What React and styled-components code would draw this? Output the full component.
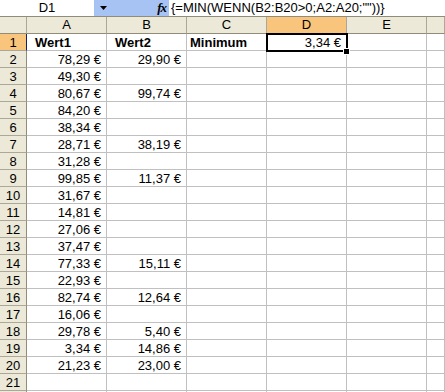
import React from 'react';
import styled, { createGlobalStyle, css } from 'styled-components';

const GlobalStyle = createGlobalStyle`
  html, body {
    margin: 0;
    padding: 0;
    background: #ffffff;
    overflow: hidden;
  }
  body {
    font-family: "Liberation Sans", Arial, sans-serif;
    font-size: 13px;
    color: #000;
  }
`;

const COLUMNS = ['A', 'B', 'C', 'D', 'E', ''];

const ROWS = [
  ['Wert1', 'Wert2', 'Minimum', '3,34 €'],
  ['78,29 €', '29,90 €'],
  ['49,30 €'],
  ['80,67 €', '99,74 €'],
  ['84,20 €'],
  ['38,34 €'],
  ['28,71 €', '38,19 €'],
  ['31,28 €'],
  ['99,85 €', '11,37 €'],
  ['31,67 €'],
  ['14,81 €'],
  ['27,06 €'],
  ['37,47 €'],
  ['77,33 €', '15,11 €'],
  ['22,93 €'],
  ['82,74 €', '12,64 €'],
  ['16,06 €'],
  ['29,78 €', '5,40 €'],
  ['3,34 €', '14,86 €'],
  ['21,23 €', '23,00 €'],
  [],
];

const Styles = {
  Window: styled.div`
    width: 445px;
    height: 392px;
    overflow: hidden;
    display: flex;
    flex-direction: column;
  `,
  FormulaBar: styled.div`
    display: flex;
    height: 16px;
    flex: none;
  `,
  NameBox: styled.div`
    width: 94px;
    background: #fff;
    text-align: center;
    line-height: 16px;
  `,
  DropZone: styled.div`
    width: 75px;
    background: #a6c3f3;
    display: flex;
    align-items: center;
    justify-content: space-between;
    padding: 0 1px 0 6px;
    box-sizing: border-box;
  `,
  Fx: styled.span`
    font-family: "Liberation Serif", "Times New Roman", serif;
    font-style: italic;
    font-weight: bold;
    font-size: 13px;
    letter-spacing: -1px;
    line-height: 16px;
    padding-right: 2px;
  `,
  Formula: styled.div`
    flex: 1;
    background: #fff;
    line-height: 16px;
    padding-left: 2px;
    white-space: nowrap;
  `,
  Grid: styled.div`
    display: grid;
    grid-template-columns: 27px repeat(5, 80px) 1fr;
    grid-auto-rows: 17px;
    border-top: 1px solid #8f8c7a;
  `,
  Corner: styled.div`
    background: #ece9d8;
    border-right: 1px solid #aca899;
    border-bottom: 1px solid #8f8c7a;
    box-sizing: border-box;
  `,
  ColHead: styled.div`
    background: ${(p) => (p.$active ? '#f9c47c' : '#ece9d8')};
    border-right: 1px solid #aca899;
    border-bottom: 1px solid ${(p) => (p.$active ? '#0a246a' : '#8f8c7a')};
    box-sizing: border-box;
    text-align: center;
    line-height: 16px;
  `,
  RowHead: styled.div`
    background: ${(p) => (p.$active ? '#f9c47c' : '#ece9d8')};
    border-right: 1px solid ${(p) => (p.$active ? '#0a246a' : '#8f8c7a')};
    border-bottom: 1px solid #aca899;
    box-sizing: border-box;
    text-align: center;
    line-height: 17px;
  `,
  Cell: styled.div`
    position: relative;
    border-right: 1px solid #c0c0c0;
    border-bottom: 1px solid #c0c0c0;
    box-sizing: border-box;
    line-height: 17px;
    white-space: nowrap;
    padding: 0 5px 0 3px;
    text-align: ${(p) => (p.$num ? 'right' : 'left')};
    ${(p) => p.$bold && css`
      font-weight: bold;
      padding-left: ${p.$indent}px;
    `}
  `,
  Selection: styled.div`
    position: absolute;
    top: -1px;
    left: -1px;
    width: 82px;
    height: 19px;
    border: 2px solid #000;
    box-sizing: border-box;
    z-index: 2;
    pointer-events: none;
  `,
  Handle: styled.div`
    position: absolute;
    right: -4px;
    bottom: -5px;
    width: 7px;
    height: 7px;
    background: #000;
    border: 1px solid #fff;
    box-sizing: border-box;
    z-index: 3;
  `,
};

const DropArrow = () => (
  <svg width="7" height="4" viewBox="0 0 7 4">
    <polygon points="0,0 7,0 3.5,4" fill="#000" />
  </svg>
);

const App = () => (
  <>
    <GlobalStyle />
    <Styles.Window>
      <Styles.FormulaBar>
        <Styles.NameBox>D1</Styles.NameBox>
        <Styles.DropZone>
          <DropArrow />
          <Styles.Fx>fx</Styles.Fx>
        </Styles.DropZone>
        <Styles.Formula>{'{=MIN(WENN(B2:B20>0;A2:A20;""))}'}</Styles.Formula>
      </Styles.FormulaBar>
      <Styles.Grid>
        <Styles.Corner />
        {COLUMNS.map((c, i) => (
          <Styles.ColHead key={i} $active={c === 'D'}>{c}</Styles.ColHead>
        ))}
        {ROWS.map((row, r) => (
          <React.Fragment key={r}>
            <Styles.RowHead $active={r === 0}>{r + 1}</Styles.RowHead>
            {COLUMNS.map((c, ci) => {
              const value = row[ci] || '';
              if (r === 0 && ci < 3) {
                return (
                  <Styles.Cell key={ci} $bold $indent={ci === 2 ? 3 : 8}>{value}</Styles.Cell>
                );
              }
              const active = r === 0 && ci === 3;
              return (
                <Styles.Cell key={ci} $num>
                  {value}
                  {active && (
                    <>
                      <Styles.Selection />
                      <Styles.Handle />
                    </>
                  )}
                </Styles.Cell>
              );
            })}
          </React.Fragment>
        ))}
        <Styles.RowHead />
        {COLUMNS.map((c, ci) => <Styles.Cell key={`x${ci}`} />)}
      </Styles.Grid>
    </Styles.Window>
  </>
);

export default App;
